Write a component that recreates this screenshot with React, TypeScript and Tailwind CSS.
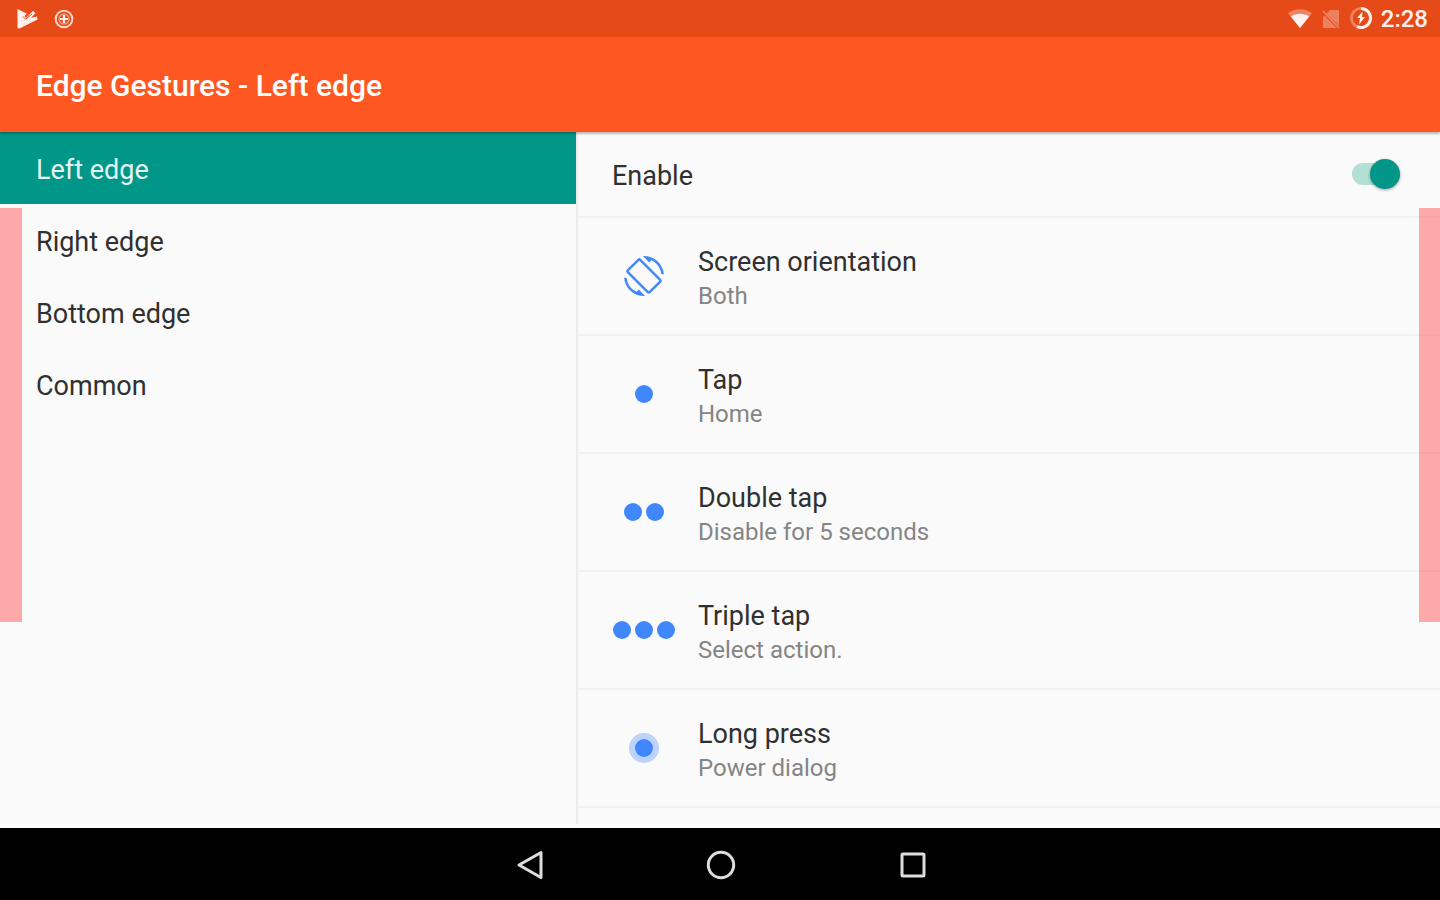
import { useState } from 'react';
import type { ReactNode } from 'react';
import { MdScreenRotation } from 'react-icons/md';

type Gesture = {
  id: string;
  title: string;
  summary: string;
  icon: ReactNode;
};

const sections = ['Left edge', 'Right edge', 'Bottom edge', 'Common'];

const gestures: Gesture[] = [
  {
    id: 'orientation',
    title: 'Screen orientation',
    summary: 'Both',
    icon: <MdScreenRotation className="size-10 text-[#4489f8]" />,
  },
  { id: 'tap', title: 'Tap', summary: 'Home', icon: <Dots count={1} /> },
  { id: 'double', title: 'Double tap', summary: 'Disable for 5 seconds', icon: <Dots count={2} /> },
  { id: 'triple', title: 'Triple tap', summary: 'Select action.', icon: <Dots count={3} /> },
  {
    id: 'long',
    title: 'Long press',
    summary: 'Power dialog',
    icon: (
      <span className="flex size-[30px] items-center justify-center rounded-full bg-[#bdd3fb]">
        <Dots count={1} />
      </span>
    ),
  },
];

export default function App() {
  const [section, setSection] = useState(sections[0]);
  const [enabled, setEnabled] = useState(true);

  return (
    <div className="relative flex min-h-screen flex-col bg-[#fafafa] font-['Roboto',sans-serif] text-[#303030]">
      <StatusBar />

      <header className="relative flex h-[95px] items-center bg-[#ff5722] px-9 pt-0.5 shadow-[0_2px_2px_rgba(0,0,0,0.25)]">
        <h1 className="text-[30px] leading-9 font-medium text-white">Edge Gestures - {section}</h1>
      </header>

      <main className="flex flex-1 border-b-4 border-white">
        <nav className="w-2/5">
          {sections.map((name) => (
            <button
              key={name}
              type="button"
              onClick={() => setSection(name)}
              className={
                name === section
                  ? 'block h-[72px] w-full bg-[#009688] px-9 pt-1 text-left text-[27px] leading-8 text-[#e4f4f2]'
                  : 'block h-[72px] w-full px-9 pt-1 text-left text-[27px] leading-8'
              }
            >
              {name}
            </button>
          ))}
        </nav>

        <section className="flex-1 border-l-2 border-[#ececec]">
          <div className="flex h-[86px] items-center justify-between border-b-2 border-[#f1f1f1] pr-10 pl-[34px]">
            <label htmlFor="enable" className="pt-1 text-[27px] leading-8">
              Enable
            </label>
            <input
              id="enable"
              type="checkbox"
              role="switch"
              checked={enabled}
              onChange={(e) => setEnabled(e.target.checked)}
              className="relative h-[22px] w-12 appearance-none rounded-full bg-[#d0d0d0] before:absolute before:-top-1 before:left-0 before:size-[30px] before:rounded-full before:bg-white before:shadow-[0_1px_3px_rgba(0,0,0,0.4)] checked:bg-[#b3dfd5] checked:before:left-[18px] checked:before:bg-[#009688]"
            />
          </div>

          <ul>
            {gestures.map((item) => (
              <li key={item.id} className="border-b-2 border-[#f1f1f1]">
                <button type="button" className="flex h-[116px] w-full items-center pl-[34px] text-left">
                  <span className="flex w-16 shrink-0 justify-center">{item.icon}</span>
                  <span className="pt-1 pl-[22px]">
                    <span className="block text-[27px] leading-9">{item.title}</span>
                    <span className="block text-2xl leading-8 text-[#858585]">{item.summary}</span>
                  </span>
                </button>
              </li>
            ))}
          </ul>
        </section>
      </main>

      <NavigationBar />

      {/* touch areas of the two side edges */}
      <div className="pointer-events-none absolute top-52 left-0 h-[414px] w-[22px] bg-[#ff5858]/50" />
      <div className="pointer-events-none absolute top-52 right-0 h-[414px] w-[21px] bg-[#ff5858]/50" />
    </div>
  );
}

function Dots({ count }: { count: number }) {
  return (
    <span className="flex gap-1">
      {Array.from({ length: count }).map((_, i) => (
        <span key={i} className="size-[18px] rounded-full bg-[#4087fc]" />
      ))}
    </span>
  );
}

function StatusBar() {
  return (
    <div className="flex h-[37px] items-center justify-between bg-[#e64a19] pr-3 pl-4 text-[#fff1ec]">
      <div className="flex items-center gap-4">
        <svg viewBox="0 0 22 22" className="size-[22px]" fill="currentColor">
          <path d="M1.5 1 11 5.8 8.5 8l1.5 1.8L17 3l2.5 2-4.5 4.8 6-1.3.5 3L3.5 20.5l-2-.5z" />
          <path d="m7 8.5 2.6 2.8L16 6" fill="none" stroke="#e64a19" strokeWidth="1" />
        </svg>
        <svg viewBox="0 0 20 20" className="size-5" fill="none" stroke="currentColor">
          <circle cx="10" cy="10" r="8.3" strokeWidth="2" strokeOpacity="0.85" />
          <circle cx="10" cy="10" r="5" strokeWidth="1.4" strokeOpacity="0.5" />
          <path d="M10 6v8M6 10h8" strokeWidth="2.2" />
        </svg>
      </div>

      <div className="flex items-center gap-2">
        <svg viewBox="0 0 26 22" className="h-[22px] w-[26px]" fill="currentColor">
          <path d="M13 20 1 5.2C8 -.1 18 -.1 25 5.2z" fillOpacity="0.35" />
          <path d="M13 20 3.8 8.5c5-3.6 13.4-3.6 18.4 0z" />
        </svg>
        <svg viewBox="0 0 20 20" className="size-5">
          <path d="M9 1h9v18H2V8z" fill="#fff" fillOpacity="0.3" />
          <path d="m1 2 17 17" stroke="#e64a19" strokeWidth="3" />
          <path d="m2 2 16 17" stroke="#fff" strokeOpacity="0.35" strokeWidth="1.5" />
        </svg>
        <svg viewBox="0 0 24 24" className="size-6" fill="none" stroke="currentColor">
          <circle cx="12" cy="11" r="9.5" strokeWidth="2.6" strokeOpacity="0.35" />
          <path d="M12 1.5a9.5 9.5 0 1 1-4 18.1" strokeWidth="3" />
          <path d="M13.5 4.5 8 11h3l-1 6.5L16 10h-3z" fill="currentColor" stroke="none" />
        </svg>
        <span className="text-2xl font-medium">2:28</span>
      </div>
    </div>
  );
}

function NavigationBar() {
  return (
    <footer className="flex h-[72px] items-center justify-center gap-36 bg-black text-[#dedede]">
      <button type="button" aria-label="Back" className="flex size-12 items-center justify-center">
        <svg viewBox="0 0 32 32" className="size-8" fill="none" stroke="currentColor" strokeWidth="3">
          <path d="M29 4.5v25L7 17z" strokeLinejoin="round" />
        </svg>
      </button>
      <button type="button" aria-label="Home" className="flex size-12 items-center justify-center">
        <svg viewBox="0 0 32 32" className="size-8" fill="none" stroke="currentColor" strokeWidth="3">
          <circle cx="17" cy="17" r="12.7" />
        </svg>
      </button>
      <button type="button" aria-label="Recent apps" className="flex size-12 items-center justify-center">
        <svg viewBox="0 0 32 32" className="size-8" fill="none" stroke="currentColor" strokeWidth="3">
          <rect x="6" y="6" width="22" height="22" rx="1" />
        </svg>
      </button>
    </footer>
  );
}
